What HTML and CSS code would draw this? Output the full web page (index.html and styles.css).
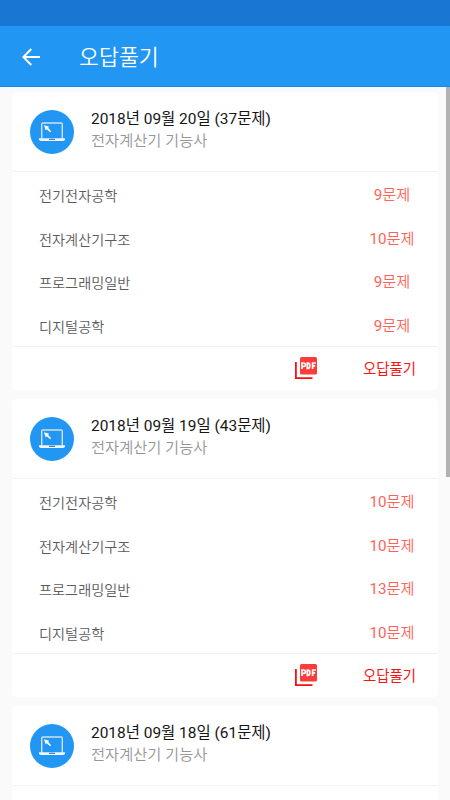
FILE: index.html
```html
<!DOCTYPE html>
<html lang="ko">
<head>
<meta charset="utf-8">
<meta name="viewport" content="width=device-width">
<title>오답풀기</title>
<link rel="stylesheet" href="styles.css">
</head>
<body>
<svg width="0" height="0" class="defs">
  <symbol id="laptop" viewBox="0 0 44 44">
    <circle cx="22" cy="22" r="22" fill="#2196f3"/>
    <path d="M11.7 28.5V14.2q0-1.2 1.2-1.2h18.2q1.2 0 1.2 1.2v14.3" fill="none" stroke="#d3e0ec" stroke-width="1.4"/>
    <path d="M9 28.3h26v1q0 1.6-2 1.6H11q-2 0-2-1.6z" fill="#f4f5f6"/>
    <path d="M19 28.8h6v1h-6z" fill="#1769c2"/>
    <path d="M14 15.3l5.3 1.5-1.2 1 3 3.5-.9.9-3.5-3-1 1.2z" fill="#fff"/>
  </symbol>
  <symbol id="pdf" viewBox="0 0 22 23">
    <path d="M.9 5v16.1h16.6" fill="none" stroke="#fb0f12" stroke-width="1.8"/>
    <rect x="5" y="0" width="17" height="17.5" rx="1.5" fill="#fb3c3a"/>
    <path d="M7 12V6h1.9q1.5 0 1.5 1.7T8.900 9.400H7.500M12.300 6.100v5.200h.8q1.700 0 1.700-2.600t-1.700-2.600zM17.600 12V6h3.200M17.600 8.800h2.600" fill="none" stroke="#fff" stroke-width="1.700"/>
  </symbol>
</svg>
<div class="status"></div>
<header class="appbar">
  <svg class="back" viewBox="0 0 18 18"><path d="M18 9H1.8M9.3 1L1.4 9l7.9 8" fill="none" stroke="#fff" stroke-width="2"/></svg>
  <h1>오답풀기</h1>
</header>
<main class="list">
  <section class="card">
    <div class="head">
      <svg class="avatar"><use href="#laptop"/></svg>
      <div><h2>2018년 09월 20일 (37문제)</h2><p>전자계산기 기능사</p></div>
    </div>
    <ul class="rows">
      <li><span>전기전자공학</span><b><i>9</i>문제</b></li>
      <li><span>전자계산기구조</span><b><i>10</i>문제</b></li>
      <li><span>프로그래밍일반</span><b><i>9</i>문제</b></li>
      <li><span>디지털공학</span><b><i>9</i>문제</b></li>
    </ul>
    <div class="actions"><svg class="pdf"><use href="#pdf"/></svg><a>오답풀기</a></div>
  </section>
  <section class="card">
    <div class="head">
      <svg class="avatar"><use href="#laptop"/></svg>
      <div><h2>2018년 09월 19일 (43문제)</h2><p>전자계산기 기능사</p></div>
    </div>
    <ul class="rows">
      <li><span>전기전자공학</span><b><i>10</i>문제</b></li>
      <li><span>전자계산기구조</span><b><i>10</i>문제</b></li>
      <li><span>프로그래밍일반</span><b><i>13</i>문제</b></li>
      <li><span>디지털공학</span><b><i>10</i>문제</b></li>
    </ul>
    <div class="actions"><svg class="pdf"><use href="#pdf"/></svg><a>오답풀기</a></div>
  </section>
  <section class="card">
    <div class="head">
      <svg class="avatar"><use href="#laptop"/></svg>
      <div><h2>2018년 09월 18일 (61문제)</h2><p>전자계산기 기능사</p></div>
    </div>
    <ul class="rows"></ul>
  </section>
  <div class="scrollbar"></div>
</main>
</body>
</html>
```
FILE: styles.css
```css
* { box-sizing: border-box; margin: 0; padding: 0; }
body {
  height: 800px;
  overflow: hidden;
  display: flex;
  flex-direction: column;
  background: #fafafa;
  font-family: Roboto, "Noto Sans CJK KR", sans-serif;
}
.defs { position: absolute; }
.status { height: 26px; flex: none; background: #1976d2; }
.appbar {
  height: 61px;
  flex: none;
  display: flex;
  align-items: center;
  gap: 39px;
  padding: 2px 0 0 22px;
  background: #2196f3;
  border-bottom: 1px solid #108be9;
}
.back { width: 18px; height: 18px; }
h1 { font-size: 21.7px; font-weight: 350; line-height: 30px; color: #fff; padding-top: 2px; }
.list {
  position: relative;
  flex: 1;
  min-height: 0;
  overflow: hidden;
  display: flex;
  flex-direction: column;
  gap: 9px;
  padding: 5px 12px 0;
}
.card { height: 298px; flex: none; background: #fff; border-radius: 5px; }
.head { height: 79px; display: flex; align-items: center; gap: 17px; padding-left: 18px; }
.avatar { width: 44px; height: 44px; flex: none; }
h2 { font-size: 15.45px; font-weight: 400; line-height: 22px; color: #151515; margin-top: -3px; }
.head p { font-size: 15.3px; line-height: 22px; color: #969696; font-weight: 350; }
.rows {
  height: 175px;
  list-style: none;
  display: flex;
  flex-direction: column;
  border-top: 1px solid #f2f2f2;
}
.rows li { height: 43.7px; flex: none; display: flex; align-items: center; justify-content: space-between; padding: 2px 20px 0 27px; }
.rows span { font-size: 14.2px; line-height: 22px; color: #5c5c5c; font-weight: 350; padding-top: 2px; }
.rows b { width: 52px; text-align: center; font-size: 15.2px; line-height: 22px; font-weight: 350; color: #ff6357; }
.rows i { font-style: normal; font-weight: 400; }
.actions {
  height: 44px;
  display: flex;
  align-items: center;
  justify-content: flex-end;
  gap: 46px;
  padding-right: 22px;
  border-top: 1px solid #f2f2f2;
}
.pdf { width: 22px; height: 23px; }
.actions a { font-size: 14.4px; line-height: 22px; color: #fa1414; padding-top: 2px; }
.scrollbar { position: absolute; top: 0; right: 0; width: 4px; height: 390px; background: #b2b2b2; }
```
